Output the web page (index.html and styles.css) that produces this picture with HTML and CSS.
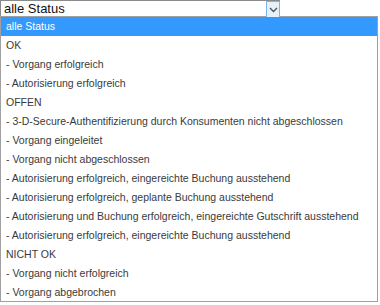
FILE: index.html
```html
<!DOCTYPE html>
<html lang="de">

<head>
    <meta charset="UTF-8">
    <meta name="viewport" content="width=device-width, initial-scale=1.0">
    <title>Status</title>
    <link rel="stylesheet" href="styles.css">
</head>

<body>
    <div class="select-row">
        <div class="select-box">
            <span class="select-value">alle Status</span>
            <span class="select-arrow">
                <svg width="9" height="6" viewBox="0 0 9 6">
                    <path d="M1 1 L4.5 4.5 L8 1" fill="none" stroke="#555" stroke-width="1.4"/>
                </svg>
            </span>
        </div>
    </div>

    <ul class="options">
        <li class="selected">alle Status</li>
        <li>OK</li>
        <li>- Vorgang erfolgreich</li>
        <li>- Autorisierung erfolgreich</li>
        <li>OFFEN</li>
        <li>- 3-D-Secure-Authentifizierung durch Konsumenten nicht abgeschlossen</li>
        <li>- Vorgang eingeleitet</li>
        <li>- Vorgang nicht abgeschlossen</li>
        <li>- Autorisierung erfolgreich, eingereichte Buchung ausstehend</li>
        <li>- Autorisierung erfolgreich, geplante Buchung ausstehend</li>
        <li>- Autorisierung und Buchung erfolgreich, eingereichte Gutschrift ausstehend</li>
        <li>- Autorisierung erfolgreich, eingereichte Buchung ausstehend</li>
        <li>NICHT OK</li>
        <li>- Vorgang nicht erfolgreich</li>
        <li>- Vorgang abgebrochen</li>
    </ul>
</body>

</html>
```
FILE: styles.css
```css
body {
    margin: 0;
    font-family: "Liberation Sans", Arial, sans-serif;
    background: #fff;
}

.select-row {
    height: 17px;
}

.select-box {
    display: flex;
    align-items: stretch;
    width: 279px;
    height: 16px;
    border-top: 1px solid #8a8a8a;
    border-left: 1px solid #8a8a8a;
    box-sizing: content-box;
}

.select-value {
    flex: 1;
    padding-left: 3px;
    font-size: 13px;
    line-height: 16px;
    color: #111;
}

.select-arrow {
    display: flex;
    align-items: center;
    justify-content: center;
    width: 12px;
    border: 1px solid #7eb4ea;
    border-bottom: none;
    background: #e5f1fb;
}

.options {
    list-style: none;
    margin: 0;
    padding: 0;
    width: 378px;
    height: 286px;
    border: 1px solid #a0a0a0;
    box-sizing: border-box;
    margin-top: -1px;
    overflow: hidden;
}

.options li {
    height: 19px;
    line-height: 19px;
    padding-left: 5px;
    font-size: 10.5px;
    color: #3a3a3a;
    white-space: nowrap;
}

.options li.selected {
    background: #3399ff;
    color: #fff;
}
```
